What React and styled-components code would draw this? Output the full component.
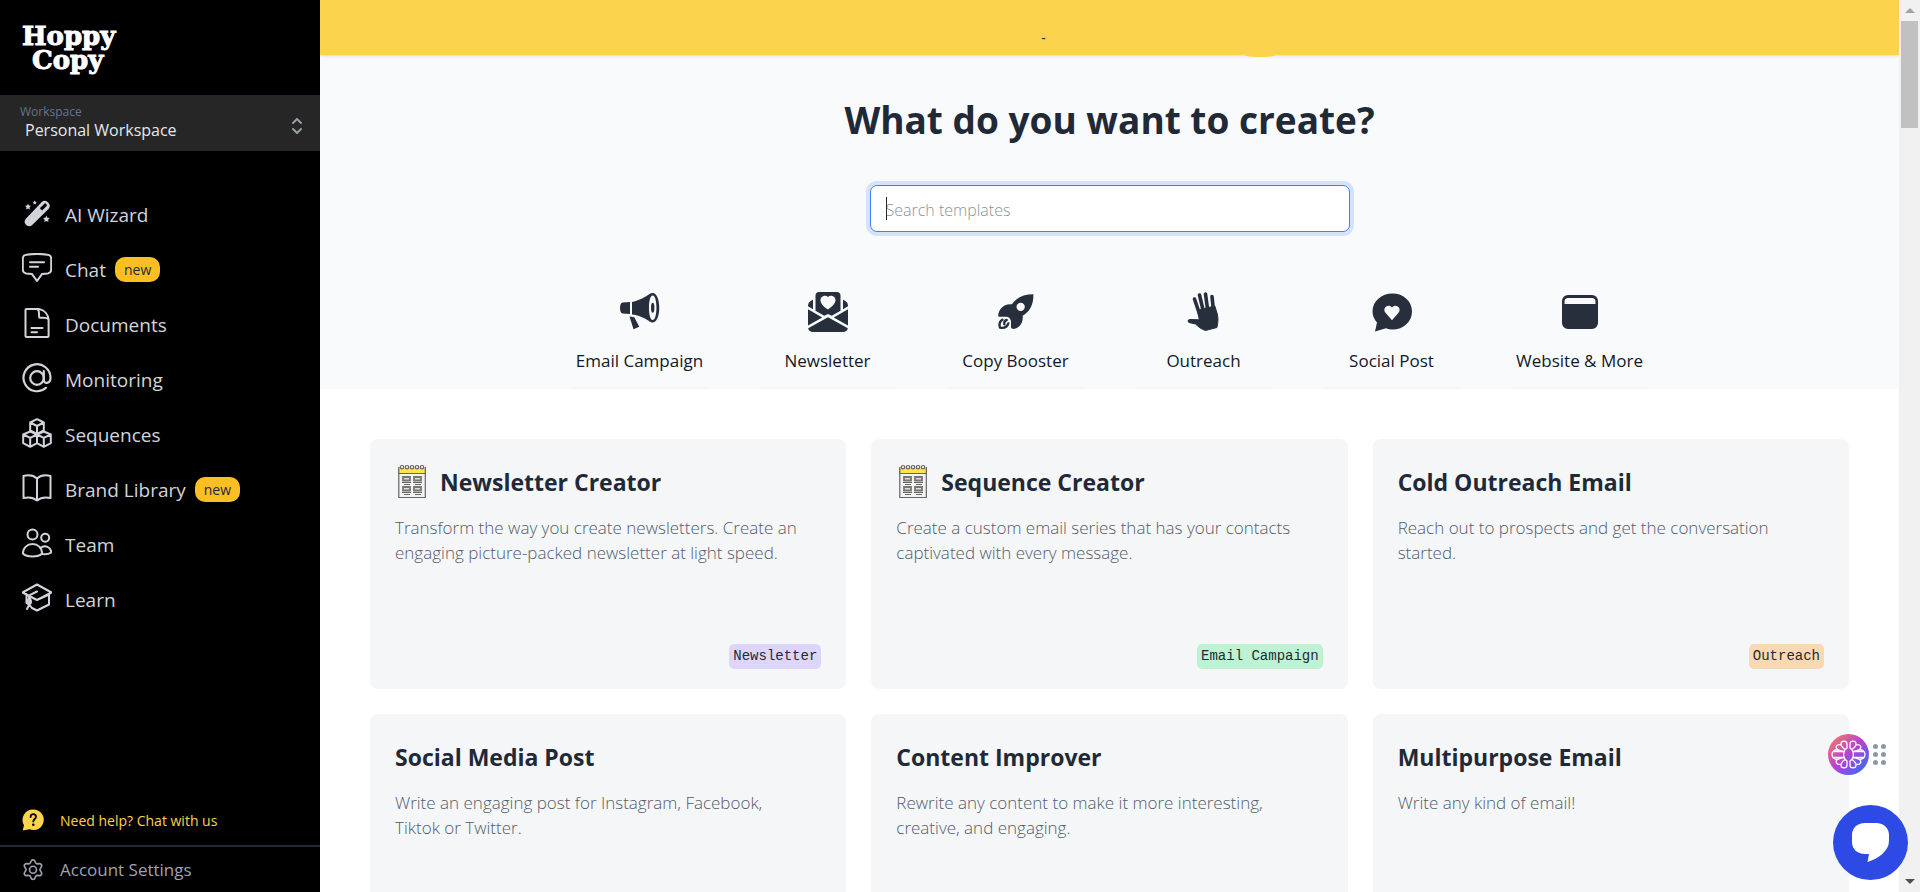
import React, { useState } from 'react';
import styled, { createGlobalStyle } from 'styled-components';
import { BsEnvelopePaperHeartFill } from 'react-icons/bs';

const GlobalStyle = createGlobalStyle`
  * {
    box-sizing: border-box;
  }
  body {
    margin: 0;
    overflow: hidden;
    background: #fff;
    font-family: 'Open Sans', 'Noto Sans', sans-serif;
    color: #1f2937;
  }
  button {
    font-family: inherit;
    border: none;
    background: none;
    padding: 0;
    cursor: pointer;
  }
  svg {
    display: block;
    flex-shrink: 0;
  }
  h1, h2, p {
    margin: 0;
  }
`;

/* ---------- icons ---------- */

const LineIcon = ({ children, size = 30, width = 2 }) => (
  <svg
    width={size}
    height={size}
    viewBox="0 0 30 30"
    fill="none"
    stroke="currentColor"
    strokeWidth={width}
    strokeLinecap="round"
    strokeLinejoin="round"
    aria-hidden="true"
  >
    {children}
  </svg>
);

const WandIcon = () => (
  <svg width="30" height="30" viewBox="0 0 30 30" fill="currentColor" aria-hidden="true">
    <path
      fillRule="evenodd"
      d="M3.800 20.800 19.600 4.200c1.700-1.700 4.200-1.800 6-.2l1 1c1.700 1.700 1.600 4.200-.1 5.900L10.200 27.100c-1.700 1.600-4.100 1.600-5.700.1l-.8-.8c-1.500-1.500-1.500-3.900.1-5.600ZM17.800 10.200l2.300 2.300 4.500-4.600c.5-.5.5-.9.1-1.300l-1-1c-.4-.4-.9-.4-1.300.1Z"
    />
    <path d="m6 5.600.9 1.900 2.100.3-1.500 1.500.4 2.100L6 10.400l-1.900 1 .4-2.100L3 7.800l2.100-.3ZM12.700 2.500l.7 1.300 1.400.2-1 1 .2 1.500-1.300-.7-1.300.7.2-1.500-1-1 1.400-.2ZM24.400 17.600l1 2.100 2.400.4-1.700 1.600.4 2.300-2.100-1.100-2.100 1.100.4-2.300-1.700-1.600 2.400-.4Z" />
  </svg>
);

const ChatIcon = () => (
  <LineIcon>
    <path d="M4.500 1.800C11 .7 19 .7 25.500 1.800c2.200.3 3.700 1.800 3.700 3.700v11.200c0 2-1.300 3.300-3.300 3.700l-5.900.7-5 6.900-5-6.900-5.900-.7c-2-.4-3.300-1.700-3.300-3.700V5.500c0-1.900 1.500-3.400 3.700-3.700ZM8 9.300h14M8 13.700h8" />
  </LineIcon>
);

const DocumentIcon = () => (
  <LineIcon>
    <path d="M4.500 1h12.300c6 1 9.200 5.700 9.800 10.500V28c0 .7-.4 1-1 1H4.500c-.7 0-1-.4-1-1V2c0-.6.3-1 1-1ZM15 1c3 .8 1.500 5.400 2.300 8.500 3 1 8.300-.8 9.300 2.500M9.500 20h11M9.500 24.300h5.500" />
  </LineIcon>
);

const AtIcon = () => (
  <LineIcon width={2.2}>
    <circle cx="15" cy="15" r="6.800" />
    <path d="M21.800 8.200v9c0 4 6.700 3.800 6.700-2.200A13.500 13.500 0 1 0 24 24.800" />
  </LineIcon>
);

const CubesIcon = () => (
  <LineIcon>
    <path d="m15 1.200 6.800 3.300v8L15 16l-6.800-3.500v-8ZM8.200 4.500 15 8l6.800-3.500M15 8v8" />
    <path d="m8.200 13.500 6.800 3v8.700l-6.800 3.600-7-3.600v-8.700ZM1.200 16.500l7 3.400 6.800-3.400M8.200 20v8.500" />
    <path d="m21.800 13.500 7 3v8.700l-7 3.600-6.800-3.600v-8.700ZM15 16.500l6.800 3.400 7-3.400M21.800 20v8.500" />
  </LineIcon>
);

const BookIcon = () => (
  <LineIcon>
    <path d="M15 5.500C11.500 2.300 6.500 1.700 1.500 3v22c5-1.200 10-.5 13.500 2.500 3.500-3 8.500-3.700 13.500-2.500V3c-5-1.300-10-.7-13.500 2.500ZM15 5.500v22" />
  </LineIcon>
);

const TeamIcon = () => (
  <LineIcon>
    <circle cx="10.500" cy="6.600" r="5" />
    <circle cx="23.200" cy="9.700" r="4" />
    <path d="M.9 25.500C1 19.800 5.200 16 10.500 16s9.500 3.800 9.600 9.500c-4 3.800-15 4-19.200 0ZM18.500 20c4.500-3.800 10.500-.8 10.700 4.500-2.200 1.500-5.500 2-9 1.600" />
  </LineIcon>
);

const LearnIcon = () => (
  <LineIcon>
    <path d="M15 1.500.5 9.500 15 17l14.500-7.500ZM27 11.500V21.500L15 27.500l-5-2.500M27 11.500 15 17 5 12M15 8.500 7.300 12.300v8M4.500 11v9l2 1.200" />
    <path d="M7.300 14.500c-2.500 3.500-2.500 6 0 7 2.300-1 2.300-3.500 0-7ZM7.300 21.500 5 26M7.300 21.500l2.200 3" />
  </LineIcon>
);

const GearIcon = () => (
  <svg width="22" height="22" viewBox="0 0 24 24" fill="none" stroke="currentColor" strokeWidth="1.800" strokeLinejoin="round" aria-hidden="true">
    <path d="M9.700 2.700c.9-2.300 3.700-2.300 4.600 0l.5 1.300c.4.900 1.300 1.400 2.300 1.300l1.500-.2c2.400-.3 3.800 2.100 2.300 4l-.9 1.200c-.6.800-.6 1.800 0 2.600l.9 1.200c1.500 1.900.1 4.300-2.300 4l-1.500-.2c-1-.1-1.900.4-2.300 1.300l-.5 1.400c-.9 2.300-3.700 2.300-4.600 0l-.5-1.400c-.4-.9-1.300-1.400-2.300-1.300l-1.500.2c-2.400.3-3.800-2.100-2.300-4l.9-1.200c.6-.8.6-1.800 0-2.600l-.9-1.200c-1.500-1.900-.1-4.300 2.300-4l1.500.2c1 .1 1.900-.4 2.300-1.300Z" />
    <circle cx="12" cy="11.700" r="3.800" />
  </svg>
);

const HelpIcon = () => (
  <svg width="22" height="22" viewBox="0 0 22 22" aria-hidden="true">
    <path fill="#fcd34d" d="M11.500.5a10.300 10.300 0 1 1-4 19.800L.7 21.500l1.300-5.300A10.400 10.400 0 0 1 11.500.5Z" />
    <path fill="none" stroke="#000" strokeWidth="1.800" strokeLinecap="round" d="M8.600 8c0-3.800 5.400-3.600 5.400-.2 0 2.300-2.700 2.200-2.700 4.700" />
    <circle cx="11.300" cy="15.800" r="1.300" />
  </svg>
);

const SelectorIcon = () => (
  <svg width="12" height="18" viewBox="0 0 12 18" fill="none" stroke="#9ca3af" strokeWidth="1.800" strokeLinecap="round" strokeLinejoin="round" aria-hidden="true">
    <path d="m2 6 4-4 4 4M2 12l4 4 4-4" />
  </svg>
);

const MegaphoneIcon = () => (
  <svg width="40" height="42" viewBox="2 0 40 42" fill="currentColor" aria-hidden="true">
    <path d="M4.500 11.500 12 11v12l-7.500-.5C1.200 22 1.200 12 4.500 11.500ZM14 11C20 10 27 6 32.500 2.500c-3 8-3 20.500 0 28.500C27 27 20 24 14 23.500ZM11.500 25.500l4.800.7 5 9.600-5.800 2.500Z" />
    <path fillRule="evenodd" d="M34.500 2c9 0 9 29.500 0 29.500s-9-29.500 0-29.500Zm.2 2.500c-5 0-5 24.500 0 24.500s5-24.500 0-24.500Z" />
    <ellipse cx="34.700" cy="16.700" rx="1.700" ry="5" />
  </svg>
);

const RocketIcon = () => (
  <svg width="36" height="36" viewBox="0 0 108 108" fill="currentColor" aria-hidden="true">
    <path
      fillRule="evenodd"
      d="M106 1c1 27-8 50-32 64 2 17-5 35-26 40-6 0-9-1-9-5V80c-3-8-7-12-14-12H2c-3-4 0-14 5-22 7-11 21-17 35-15C56 10 78 1 106 1ZM68 26a12.500 12.500 0 1 0 0 25 12.500 12.500 0 0 0 0-25Z"
    />
    <path
      fill="none"
      stroke="currentColor"
      strokeWidth="7"
      strokeLinecap="round"
      strokeLinejoin="round"
      d="M13 77C5 82 3 91 6 101c12 2 22-3 25-13M19 91c-1-8 2-12 7-13"
    />
  </svg>
);

const HandIcon = () => (
  <svg width="42" height="42" viewBox="0 0 42 42" fill="none" stroke="currentColor" strokeLinecap="round" aria-hidden="true">
    <path strokeWidth="3.600" d="m11.500 8 5 15M16.500 4l4 17M22.500 3l2.300 17M29 5.500 30.500 20" />
    <path fill="currentColor" strokeWidth="1" strokeLinejoin="round" d="m14.800 19 17-4 2.500 8c1.100 5 .8 8-.4 13.500L22.500 39.500c-4.500-1.500-7.500-4-10-6.500l-6.500-1.500c-1.500-.6-1-3 .5-3l9.500.3Z" />
  </svg>
);

const HeartChatIcon = () => (
  <svg width="42" height="42" viewBox="0 0 42 42" fill="currentColor" aria-hidden="true">
    <path
      fillRule="evenodd"
      d="M21.500 2.500c11 0 19.500 7.700 19.500 18s-8.500 18-19.500 18c-2.200 0-4.500-.4-6.500-1.200L4 40.500l2-9C3 28.300 1.500 24.700 1.500 20.500c0-10.300 9-18 20-18Zm-.5 26.800 6.300-7.200c4.200-5.200-2.800-10.200-6.300-5.600-3.500-4.600-10.500.4-6.300 5.600Z"
    />
  </svg>
);

const WindowIcon = () => (
  <svg width="42" height="42" viewBox="0 0 42 42" fill="currentColor" aria-hidden="true">
    <path
      fillRule="evenodd"
      d="M9 4h24a6 6 0 0 1 6 6v22a6 6 0 0 1-6 6H9a6 6 0 0 1-6-6V10a6 6 0 0 1 6-6ZM9 7c-2 0-3.500 1.500-3.500 3.500V13h31v-2.500C36.500 8.500 35 7 33 7Z"
    />
  </svg>
);

const NotepadIcon = () => (
  <svg width="34" height="36" viewBox="0 0 34 36" fill="none" stroke="#666" strokeWidth="1.200" aria-hidden="true">
    <path fill="#f4f4f2" d="M3.800 5h26.500v28.500H3.800Z" />
    <path fill="#fde74c" stroke="none" d="M3.800 3h26.500v6H3.800Z" />
    <path d="M3.800 3v6.500h26.500V3" />
    {[7, 12, 17, 22, 27].map((x) => (
      <circle key={x} cx={x} cy="3.200" r="1.700" fill="#f4f4f2" />
    ))}
    {[8, 19].map((x) =>
      [13, 23].map((y) => (
        <g key={`${x}-${y}`}>
          <path strokeWidth="1.800" stroke="#777" fill="#ddd" d={`M${x} ${y}h7v3.500h-7Z`} />
          <path d={`M${x - 1} ${y + 5.5}h9M${x + 1} ${y + 7.5}h6`} />
        </g>
      ))
    )}
  </svg>
);

const BrainIcon = () => (
  <svg width="41" height="41" viewBox="0 0 41 41" aria-hidden="true">
    <defs>
      <linearGradient id="brain" x1="0" y1="0" x2="1" y2="1">
        <stop offset="0.100" stopColor="#f0766c" />
        <stop offset="0.500" stopColor="#b63fd8" />
        <stop offset="0.900" stopColor="#3b6cf6" />
      </linearGradient>
    </defs>
    <circle cx="20.500" cy="20.500" r="20.500" fill="url(#brain)" />
    <g fill="none" stroke="#fff" strokeWidth="1.300" strokeLinejoin="round">
      {['', 'matrix(-1 0 0 1 41 0)'].map((t) => (
        <g key={t} transform={t}>
          <path d="M19 14V10c0-3.800-6-3.800-6 0 0 2 2 4 4 5.500ZM13 11c-4-1.500-6.500 2.500-3.500 4.500 2 1.200 4.500 1.500 6.500 2M10 15.500c-4 0-6 2.500-6 5s2 5 6 5M5 17.500h10.500M5 23.500h10.500M16 23.500c-2 .5-4.500.8-6.500 2-3 2-.5 6 3.500 4.500M19 27v4c0 3.800-6 3.800-6 0 0-2 2-4 4-5.500ZM19 14c-4.500 3-4.500 10 0 13" />
        </g>
      ))}
    </g>
  </svg>
);

const MessageIcon = () => (
  <svg width="39" height="41" viewBox="0 0 39 41" fill="#fff" aria-hidden="true">
    <path d="M14 1h11c8 0 13 5 13 12v6c0 10-10.500 17.500-21.500 21L18 32h-4C6 32 1 27 1 20v-7C1 6 6 1 14 1Z" />
  </svg>
);

/* ---------- data ---------- */

const navItems = [
  { label: 'AI Wizard', icon: WandIcon },
  { label: 'Chat', icon: ChatIcon, isNew: true },
  { label: 'Documents', icon: DocumentIcon },
  { label: 'Monitoring', icon: AtIcon },
  { label: 'Sequences', icon: CubesIcon },
  { label: 'Brand Library', icon: BookIcon, isNew: true },
  { label: 'Team', icon: TeamIcon },
  { label: 'Learn', icon: LearnIcon },
];

const categories = [
  { label: 'Email Campaign', icon: <MegaphoneIcon /> },
  { label: 'Newsletter', icon: <BsEnvelopePaperHeartFill size={40} /> },
  { label: 'Copy Booster', icon: <RocketIcon /> },
  { label: 'Outreach', icon: <HandIcon /> },
  { label: 'Social Post', icon: <HeartChatIcon /> },
  { label: 'Website & More', icon: <WindowIcon /> },
];

const templates = [
  {
    title: 'Newsletter Creator',
    text: 'Transform the way you create newsletters. Create an engaging picture-packed newsletter at light speed.',
    tag: 'Newsletter',
    color: '#ddd6fa',
    pad: true,
  },
  {
    title: 'Sequence Creator',
    text: 'Create a custom email series that has your contacts captivated with every message.',
    tag: 'Email Campaign',
    color: '#bdf3d2',
    pad: true,
  },
  {
    title: 'Cold Outreach Email',
    text: 'Reach out to prospects and get the conversation started.',
    tag: 'Outreach',
    color: '#f9d8b4',
  },
  {
    title: 'Social Media Post',
    text: 'Write an engaging post for Instagram, Facebook, Tiktok or Twitter.',
  },
  {
    title: 'Content Improver',
    text: 'Rewrite any content to make it more interesting, creative, and engaging.',
  },
  {
    title: 'Multipurpose Email',
    text: 'Write any kind of email!',
  },
];

/* ---------- app ---------- */

function App() {
  const [query, setQuery] = useState('');

  return (
    <Layout>
      <GlobalStyle />
      <Sidebar>
        <Logo href="#">
          <span>Hoppy</span>
          <span>Copy</span>
        </Logo>
        <Workspace type="button">
          <WorkspaceText>
            <small>Workspace</small>
            <strong>Personal Workspace</strong>
          </WorkspaceText>
          <SelectorIcon />
        </Workspace>
        <Nav>
          {navItems.map(({ label, icon: Icon, isNew }) => (
            <NavLink href="#" key={label}>
              <Icon />
              <span>{label}</span>
              {isNew && <NewBadge>new</NewBadge>}
            </NavLink>
          ))}
        </Nav>
        <HelpLink href="#">
          <HelpIcon />
          Need help? Chat with us
        </HelpLink>
        <SettingsLink href="#">
          <GearIcon />
          Account Settings
        </SettingsLink>
      </Sidebar>

      <Main>
        <Banner>-</Banner>
        <Hero>
          <h1>What do you want to create?</h1>
          <SearchBox>
            <input
              type="text"
              aria-label="Search templates"
              placeholder="Search templates"
              value={query}
              onChange={(e) => setQuery(e.target.value)}
            />
            <Caret />
          </SearchBox>
          <Categories>
            {categories.map(({ label, icon }) => (
              <Category type="button" key={label}>
                <CategoryIcon>{icon}</CategoryIcon>
                {label}
              </Category>
            ))}
          </Categories>
        </Hero>
        <CardGrid>
          {templates.map(({ title, text, tag, color, pad }) => (
            <Card key={title}>
              <CardTitle>
                {pad && <NotepadIcon />}
                {title}
              </CardTitle>
              <p>{text}</p>
              {tag && <Tag $color={color}>{tag}</Tag>}
            </Card>
          ))}
        </CardGrid>
      </Main>

      <Scrollbar aria-hidden="true">
        <Arrow $up />
        <Thumb />
        <Arrow />
      </Scrollbar>

      <Assistant>
        <button type="button" aria-label="Open assistant">
          <BrainIcon />
        </button>
        <DragDots>
          {[0, 1, 2, 3, 4, 5].map((n) => (
            <i key={n} />
          ))}
        </DragDots>
      </Assistant>
      <ChatButton type="button" aria-label="Open chat">
        <MessageIcon />
      </ChatButton>
    </Layout>
  );
}

const Layout = styled.div`
  display: flex;
  height: 100vh;
  overflow: hidden;
`;

const Sidebar = styled.aside`
  display: flex;
  flex-direction: column;
  flex: 0 0 320px;
  background: #000;
  color: #d1d5db;
`;

const Logo = styled.a`
  display: flex;
  flex-direction: column;
  height: 95px;
  padding: 24px 22px;
  color: #fff;
  font: bold 26px/24px 'DejaVu Serif', serif;
  text-decoration: none;
  -webkit-text-stroke: 1px #fff;

  span + span {
    padding-left: 10px;
  }
`;

const Workspace = styled.button`
  display: flex;
  align-items: center;
  justify-content: space-between;
  height: 56px;
  padding: 4px 17px 0 20px;
  border-top: 1px solid #1f2937;
  background: #262626;
  text-align: left;
`;

const WorkspaceText = styled.span`
  display: flex;
  flex-direction: column;
  padding-bottom: 6px;

  small {
    color: #64748b;
    font-size: 12px;
    line-height: 16px;
  }
  strong {
    padding-left: 5px;
    color: #e5e7eb;
    font-size: 16px;
    font-weight: 400;
    line-height: 21px;
  }
`;

const Nav = styled.nav`
  display: flex;
  flex: 1;
  flex-direction: column;
  padding: 36px 22px;
`;

const NavLink = styled.a`
  display: flex;
  align-items: center;
  height: 55px;
  color: #d1d5db;
  font-size: 19px;
  text-decoration: none;

  svg {
    margin-bottom: 3px;
  }
  svg + span {
    margin-left: 13px;
  }
`;

const NewBadge = styled.span`
  margin-left: 9px;
  padding: 0 9px;
  border-radius: 10px;
  background: #fbbf24;
  color: #1f2937;
  font-size: 14px;
  line-height: 25px;
`;

const HelpLink = styled.a`
  display: flex;
  align-items: center;
  gap: 16px;
  height: 50px;
  padding: 0 22px;
  color: #fcd34d;
  font-size: 14px;
  text-decoration: none;
`;

const SettingsLink = styled(HelpLink)`
  height: 47px;
  border-top: 2px solid #1f2937;
  color: #9ca3af;
  font-size: 17px;
`;

const Main = styled.main`
  flex: 1;
  min-width: 0;
  overflow: hidden;
`;

const Banner = styled.div`
  position: relative;
  height: 55px;
  padding: 26px 132px 0 0;
  background: #fcd34d;
  box-shadow: 0 1px 3px rgba(0, 0, 0, 0.15);
  font-size: 14px;
  line-height: 24px;
  text-align: center;

  &::after {
    content: '';
    position: absolute;
    top: 100%;
    left: 58.6%;
    width: 30px;
    height: 2px;
    border-radius: 0 0 50% 50% / 0 0 100% 100%;
    background: #fcd34d;
  }
`;

const Hero = styled.header`
  display: flex;
  flex-direction: column;
  align-items: center;
  padding-top: 40px;
  background: #f9fafc;

  h1 {
    font-size: 37px;
    font-weight: 700;
    line-height: 50px;
  }
`;

const SearchBox = styled.div`
  position: relative;
  width: 480px;
  margin: 40px 0 50px;

  input {
    display: block;
    width: 100%;
    height: 47px;
    padding: 2px 15px 0;
    border: 1px solid #3b82f6;
    border-radius: 7px;
    outline: none;
    box-shadow: 0 0 0 4px #d6e2fa;
    background: #fff;
    color: #1f2937;
    font: 300 16px 'Open Sans', 'Noto Sans', sans-serif;
  }
  input::placeholder {
    color: #8b929e;
  }
`;

const Caret = styled.span`
  position: absolute;
  top: 12px;
  left: 16px;
  width: 1px;
  height: 23px;
  background: #1f2937;
`;

const Categories = styled.div`
  display: flex;
  gap: 50px;
`;

const Category = styled.button`
  display: flex;
  flex-direction: column;
  align-items: center;
  width: 138px;
  height: 107px;
  padding-top: 9px;
  border-bottom: 2px solid #f5f6f8;
  color: #111827;
  font-size: 17px;
  line-height: 24px;
  white-space: nowrap;
`;

const CategoryIcon = styled.span`
  display: flex;
  align-items: center;
  justify-content: center;
  height: 42px;
  margin-bottom: 16px;
  color: #272f3d;
`;

const CardGrid = styled.section`
  display: grid;
  grid-template-columns: repeat(3, minmax(0, 1fr));
  gap: 25px;
  padding: 50px;
`;

const Card = styled.article`
  display: flex;
  flex-direction: column;
  min-height: 250px;
  padding: 24px 25px 20px;
  border-radius: 8px;
  background: #f4f6f8;

  p {
    padding-right: 20px;
    color: #535c6a;
    font-size: 17px;
    font-weight: 300;
    line-height: 25px;
  }
`;

const CardTitle = styled.h2`
  display: flex;
  align-items: center;
  gap: 11px;
  height: 38px;
  margin-bottom: 14px;
  font-size: 23px;
  font-weight: 700;
`;

const Tag = styled.span`
  align-self: flex-end;
  margin-top: auto;
  padding: 0 4px;
  border-radius: 5px;
  background: ${(props) => props.$color};
  font: 14px/25px 'Liberation Mono', monospace;
`;

const Scrollbar = styled.div`
  display: flex;
  flex: 0 0 21px;
  flex-direction: column;
  align-items: center;
  background: #f1f1f1;
`;

const Arrow = styled.span`
  margin: ${(props) => (props.$up ? '8px 0' : 'auto 0 8px')};
  border: 5px solid transparent;
  border-top-width: ${(props) => (props.$up ? '0' : '5px')};
  border-bottom-width: ${(props) => (props.$up ? '5px' : '0')};
  border-top-color: #505050;
  border-bottom-color: #a3a3a3;
`;

const Thumb = styled.span`
  width: 17px;
  height: 107px;
  background: #c1c1c1;
`;

const Assistant = styled.div`
  position: fixed;
  right: 34px;
  bottom: 117px;
  display: flex;
  align-items: center;
  gap: 4px;
`;

const DragDots = styled.span`
  display: grid;
  grid-template-columns: 5px 5px;
  gap: 3px;

  i {
    height: 5px;
    border-radius: 50%;
    background: #8d99a6;
  }
`;

const ChatButton = styled.button`
  position: fixed;
  right: 12px;
  bottom: 12px;
  display: flex;
  align-items: center;
  justify-content: center;
  width: 75px;
  height: 75px;
  border-radius: 50%;
  background: #2d4ae5;
`;

export default App;
